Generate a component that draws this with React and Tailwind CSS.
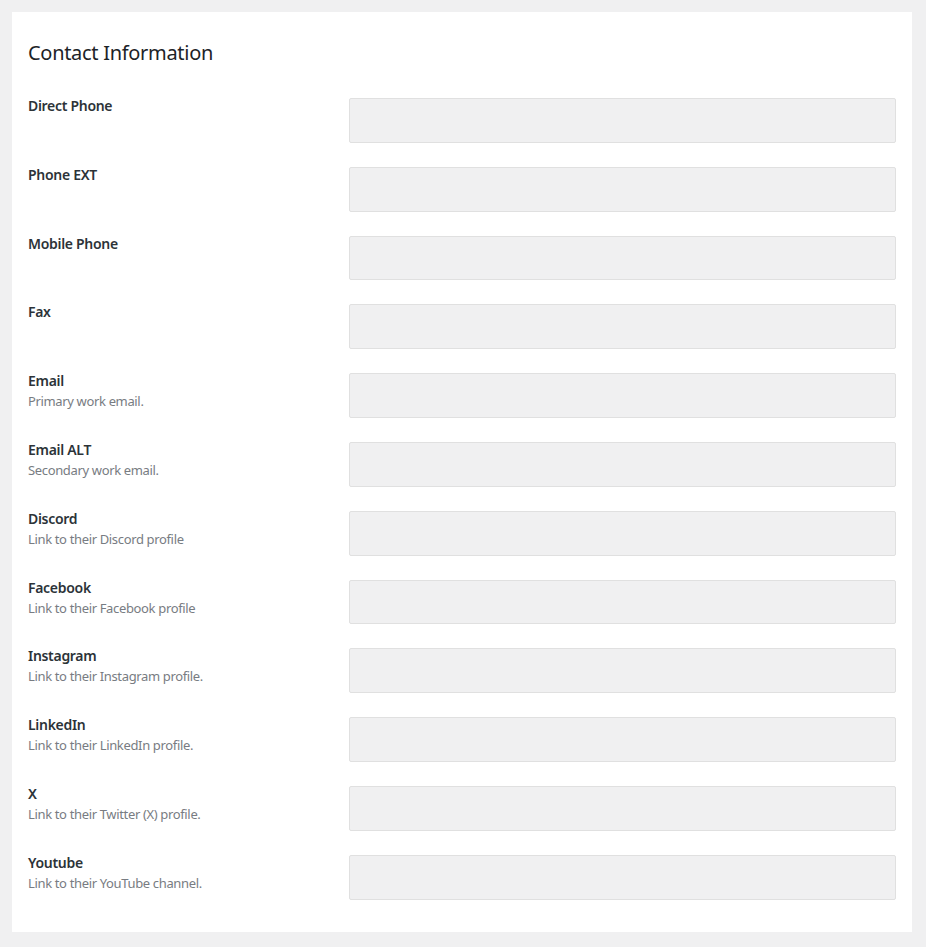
import React from 'react';

const fields = [
    { label: 'Direct Phone' },
    { label: 'Phone EXT' },
    { label: 'Mobile Phone' },
    { label: 'Fax' },
    { label: 'Email', hint: 'Primary work email.' },
    { label: 'Email ALT', hint: 'Secondary work email.' },
    { label: 'Discord', hint: 'Link to their Discord profile' },
    { label: 'Facebook', hint: 'Link to their Facebook profile' },
    { label: 'Instagram', hint: 'Link to their Instagram profile.' },
    { label: 'LinkedIn', hint: 'Link to their LinkedIn profile.' },
    { label: 'X', hint: 'Link to their Twitter (X) profile.' },
    { label: 'Youtube', hint: 'Link to their YouTube channel.' },
];

const App = () => {
    return (
        <div className="min-h-screen bg-[#f0f0f1] pt-3 pl-3 pr-[14px] pb-3 font-['Noto_Sans','Open_Sans',sans-serif]">
            <div className="bg-white px-4 pt-[27px] pb-[32px]">
                <h2 className="text-[20px] leading-[28px] tracking-[-0.3px] text-[#1d2327] font-normal">Contact Information</h2>
                <div className="mt-[31px] flex flex-col gap-6">
                    {fields.map((field) => (
                        <div key={field.label} className="flex items-start">
                            <div className="w-[321px] shrink-0 -mt-[1px]">
                                <div className="text-[14px] leading-[18px] tracking-[-0.3px] font-semibold text-[#2c3338]">{field.label}</div>
                                {field.hint && (
                                    <div className="mt-[1px] text-[13px] leading-[20px] tracking-[-0.35px] text-[#787c82]">{field.hint}</div>
                                )}
                            </div>
                            <input
                                type="text"
                                className="h-[44.8px] flex-1 rounded-[2px] border border-[#e0e0e0] bg-[#f0f0f1] outline-none"
                            />
                        </div>
                    ))}
                </div>
            </div>
        </div>
    );
};

export default App;
